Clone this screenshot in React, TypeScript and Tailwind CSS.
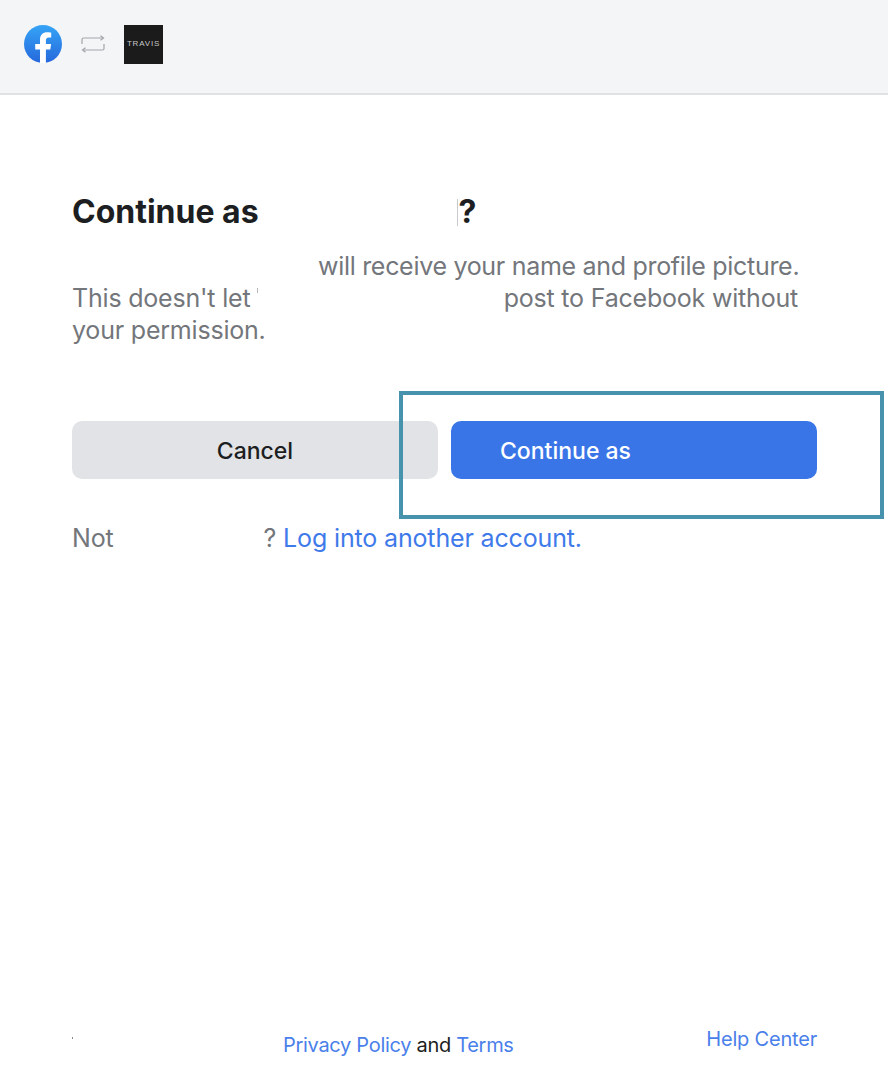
const App = () => {
  return (
    <div className="relative flex h-[1070px] w-[888px] flex-col overflow-hidden bg-white font-['Inter',sans-serif]">
      <div className="flex h-[95px] items-center border-b-2 border-[#e0e1e4] bg-[#f4f5f7] pb-[5px] pl-6">
        <svg viewBox="0 0 38 38" className="h-[38px] w-[38px]">
          <defs>
            <linearGradient id="fb" x1="0" y1="0" x2="0" y2="1">
              <stop offset="0" stopColor="#35a4f6" />
              <stop offset="1" stopColor="#2668dc" />
            </linearGradient>
          </defs>
          <circle cx="19" cy="19" r="19" fill="url(#fb)" />
          <path
            d="M16 38V24.6h-4.8V19H16v-4.3c0-4.8 2.8-7.4 7.2-7.4 2.1 0 4 .4 4 .4v4.7h-2.3c-2.3 0-3 1.4-3 2.9V19h5.2l-.8 5.6h-4.4V38z"
            fill="#fff"
          />
        </svg>
        <svg
          viewBox="0 0 24 20"
          className="ml-[19px] h-5 w-6"
          fill="none"
          stroke="#a3a5a9"
          strokeWidth="1.2"
        >
          <path d="M1 10V5.5Q1 4 2.5 4H22" />
          <path d="M19.5 1.8 22.5 4l-3 2.2" />
          <path d="M23 10v4.5q0 1.5-1.5 1.5H2" />
          <path d="M4.5 13.8 1.5 16l3 2.2" />
        </svg>
        <div className="ml-[19px] flex h-[39px] w-[39px] items-center justify-center bg-[#1b1b1b] font-['Liberation_Sans',sans-serif] text-[8px] tracking-[0.1em] text-[#c8c8c8]">
          TRAVIS
        </div>
      </div>

      <div className="flex flex-1 flex-col pl-[72px] pr-[71px]">
        <h1 className="mt-[97px] flex h-10 items-center text-[32px] font-bold leading-10 text-[#1c1e21]">
          <span>Continue as</span>
          <span className="ml-[198px] h-[27px] w-px bg-[#c9cacc]" />
          <span className="ml-[1px]">?</span>
        </h1>

        <div className="mt-[18px] w-[726px] whitespace-nowrap text-[25px] leading-8 tracking-[-0.2px] text-[#73767b]">
          <p className="pl-[246px] tracking-[-0.3px]">will receive your name and profile picture.</p>
          <p className="flex justify-between">
            <span className="flex items-start">
              This doesn't let
              <span className="ml-[7px] mt-[6px] h-[5px] w-px bg-[#b5b6b9]" />
            </span>
            <span>post to Facebook without</span>
          </p>
          <p>your permission.</p>
        </div>

        <div className="mt-[75px] flex gap-[13px]">
          <button className="h-[58px] w-[366px] rounded-[10px] bg-[#e1e3e6] pt-[2px] text-[23px] font-medium text-[#1c1e21]">
            Cancel
          </button>
          <button className="h-[58px] w-[366px] rounded-[10px] bg-[#3a75e8] pl-[49px] pt-[2px] text-left text-[23px] font-medium text-white">
            Continue as
          </button>
        </div>

        <p className="mt-[43px] text-[25px] leading-8 tracking-[-0.15px] text-[#73767b]">
          Not
          <span className="ml-[150px]">?</span>{" "}
          <a className="text-[#3f7aea]">Log into another account.</a>
        </p>

        <div className="mt-auto flex h-[51px] items-start text-[20px] leading-7 tracking-[-0.3px]">
          <span className="mt-[18px] h-[2px] w-px bg-[#888a8d]" />
          <div className="mt-[12px] ml-[210px] text-[#1c1e21]">
            <a className="text-[#4a80ea]">Privacy Policy</a> and{" "}
            <a className="text-[#4a80ea]">Terms</a>
          </div>
          <a className="mt-[6px] ml-auto tracking-[-0.2px] text-[#4a80ea]">Help Center</a>
        </div>
      </div>

      <div className="absolute left-[399px] top-[391px] h-[128px] w-[485px] border-4 border-[#4793ae]" />
    </div>
  );
};

export default App;
